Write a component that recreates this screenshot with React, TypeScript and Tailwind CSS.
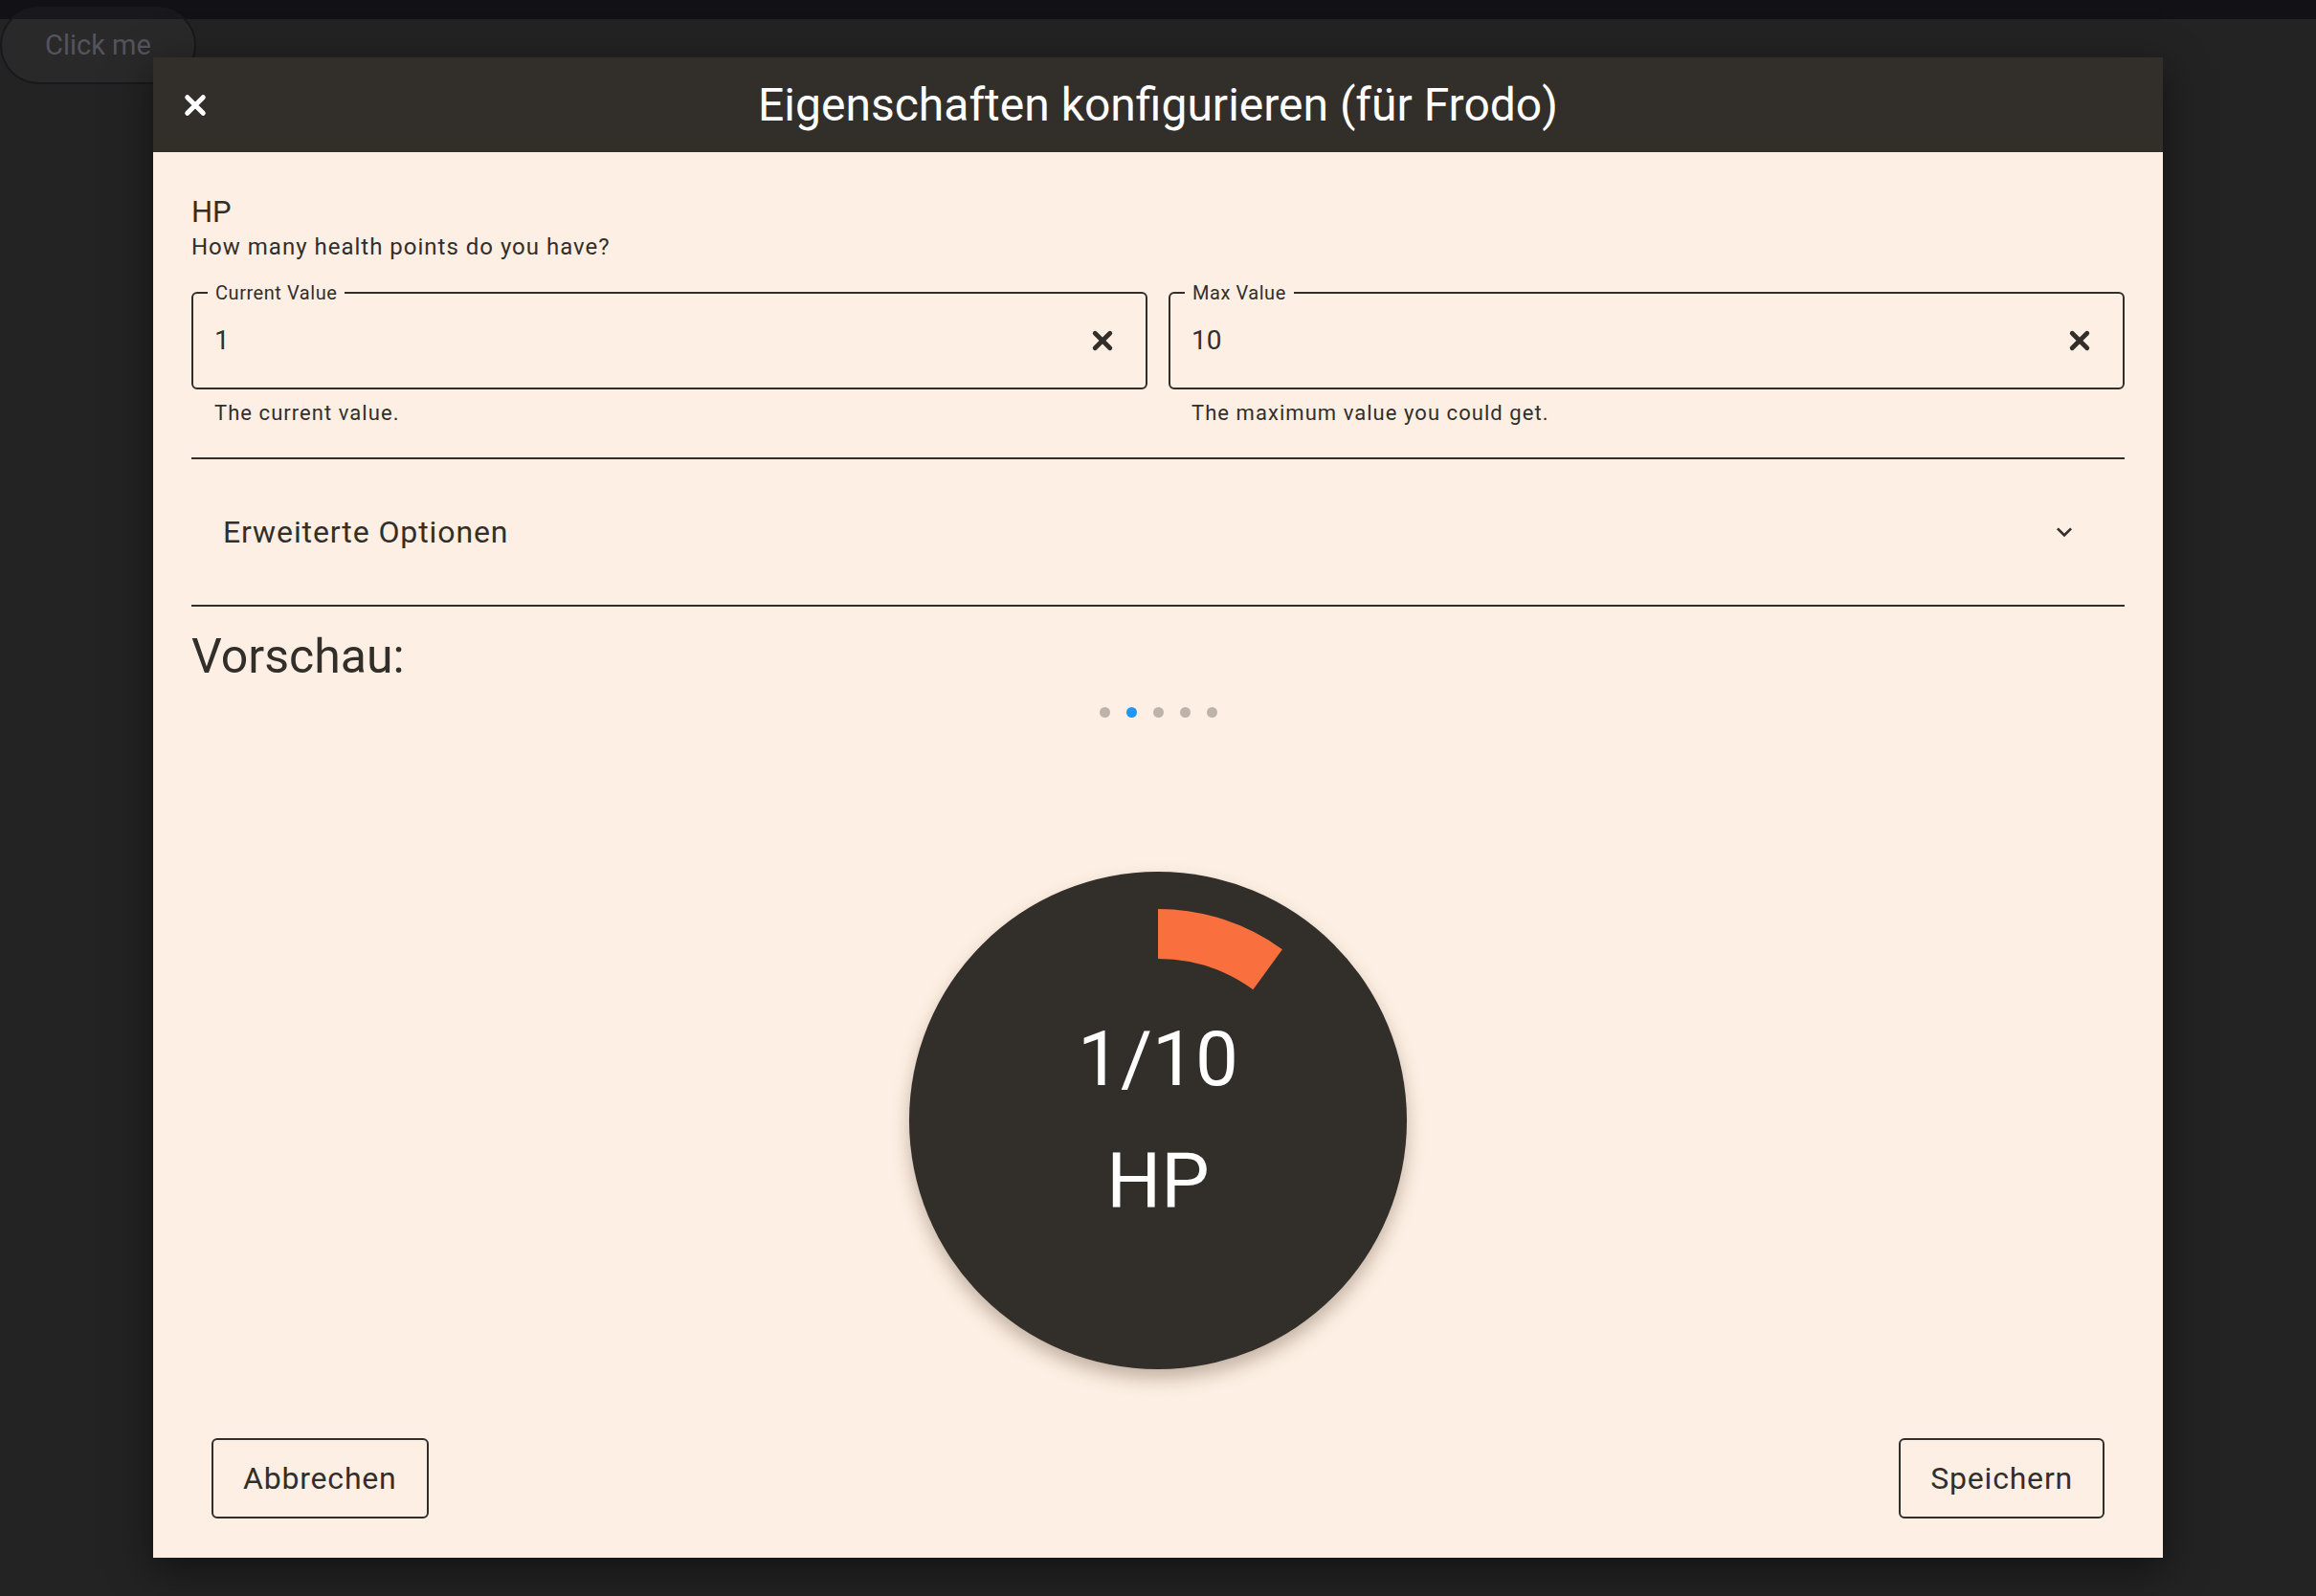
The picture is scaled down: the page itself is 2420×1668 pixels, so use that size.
import React from "react";

const EXPAND_PATH = "M16.59 8.59 12 13.17 7.41 8.59 6 10l6 6 6-6z";

function CloseIcon({ className }: { className?: string }) {
  return (
    <svg viewBox="0 0 24 24" className={className} fill="none" stroke="currentColor" strokeWidth={3.4} strokeLinecap="round" aria-hidden>
      <path d="M6.5 6.5 17.5 17.5M17.5 6.5 6.5 17.5" />
    </svg>
  );
}

function ExpandIcon({ className }: { className?: string }) {
  return (
    <svg viewBox="0 0 24 24" className={className} fill="currentColor" aria-hidden>
      <path d={EXPAND_PATH} />
    </svg>
  );
}

function ValueField({ label, value, helper }: { label: string; value: string; helper: string }) {
  return (
    <div className="flex flex-col">
      <div className="relative flex h-[102px] items-center rounded-[6px] border-2 border-[#322e2a] pl-[22px] pr-[28px]">
        <span className="absolute left-[15px] top-[-13px] bg-[#fdefe3] px-[8px] text-[20px] leading-[24px] tracking-[0.55px]">
          {label}
        </span>
        <span className="flex-1 text-[28px] leading-none">{value}</span>
        <CloseIcon className="h-[34px] w-[34px]" />
      </div>
      <p className="mt-[12px] pl-[24px] text-[22px] leading-[26px] tracking-[1.05px]">{helper}</p>
    </div>
  );
}

function HealthGauge({ current, max }: { current: number; max: number }) {
  const c = 260;
  const outer = 221;
  const inner = 169;
  const a = (current / max) * Math.PI * 2;
  const ox = c + outer * Math.sin(a);
  const oy = c - outer * Math.cos(a);
  const ix = c + inner * Math.sin(a);
  const iy = c - inner * Math.cos(a);
  const large = a > Math.PI ? 1 : 0;
  const d = `M${c} ${c - outer} A${outer} ${outer} 0 ${large} 1 ${ox} ${oy} L${ix} ${iy} A${inner} ${inner} 0 ${large} 0 ${c} ${c - inner} Z`;

  return (
    <div className="relative mx-auto flex h-[520px] w-[520px] flex-col items-center justify-center rounded-full bg-[#322e2a] text-white shadow-[0_10px_18px_rgba(90,70,50,0.35)]">
      <svg viewBox="0 0 520 520" className="absolute inset-0 h-full w-full">
        <path d={d} fill="#f9703e" />
      </svg>
      <span className="relative text-[80px] leading-[127px]">
        {current}/{max}
      </span>
      <span className="relative text-[80px] leading-[127px]">HP</span>
    </div>
  );
}

export default function App() {
  return (
    <div className="relative h-[1668px] w-full overflow-hidden bg-[#232323] font-['Roboto',sans-serif]">
      <div className="h-[20px] bg-[#121116]" />

      <button className="absolute left-0 top-[7px] flex h-[81px] w-[205px] items-center justify-center rounded-full border-2 border-[#19181c] bg-white/[0.03] text-[29px] text-[#55535e]">
        Click me
      </button>

      <div className="absolute left-[160px] top-[60px] flex h-[1568px] w-[2100px] flex-col bg-[#fdefe3] text-[#322e2a] shadow-[0_12px_40px_rgba(0,0,0,0.5)]">
        <div className="relative flex h-[99px] shrink-0 items-center justify-center bg-[#322e2a]">
          <button className="absolute left-[26px] top-1/2 -translate-y-1/2 text-white">
            <CloseIcon className="h-[36px] w-[36px]" />
          </button>
          <h2 className="text-[48px] leading-none text-white">Eigenschaften konfigurieren (für Frodo)</h2>
        </div>

        <div className="flex flex-1 flex-col px-[40px] pt-[43px]">
          <p className="text-[31px] leading-[40px]">HP</p>
          <p className="text-[24px] leading-[32px] tracking-[1px]">How many health points do you have?</p>

          <div className="mt-[31px] grid grid-cols-2 gap-x-[22px]">
            <ValueField label="Current Value" value="1" helper="The current value." />
            <ValueField label="Max Value" value="10" helper="The maximum value you could get." />
          </div>

          <div className="mt-[33px] h-[2px] bg-[#322e2a]" />
          <div className="flex h-[152px] items-center justify-between pl-[33px] pr-[47px]">
            <span className="text-[32px] tracking-[0.9px]">Erweiterte Optionen</span>
            <ExpandIcon className="h-[32px] w-[32px]" />
          </div>
          <div className="h-[2px] bg-[#322e2a]" />

          <h3 className="mt-[22px] text-[50px] leading-[60px]">Vorschau:</h3>

          <div className="mt-[23px] flex justify-center gap-[17px]">
            {[0, 1, 2, 3, 4].map((i) => (
              <span
                key={i}
                className={i === 1 ? "h-[11px] w-[11px] rounded-full bg-[#2196f3]" : "h-[11px] w-[11px] rounded-full bg-[#bdb3a9]"}
              />
            ))}
          </div>

          <div className="mt-[161px]">
            <HealthGauge current={1} max={10} />
          </div>

          <div className="mt-[72px] flex justify-between px-[21px]">
            <button className="h-[84px] rounded-[6px] border-2 border-[#322e2a] px-[31px] text-[32px] tracking-[0.8px]">
              Abbrechen
            </button>
            <button className="h-[84px] rounded-[6px] border-2 border-[#322e2a] px-[31px] text-[32px] tracking-[0.8px]">
              Speichern
            </button>
          </div>
        </div>
      </div>
    </div>
  );
}
